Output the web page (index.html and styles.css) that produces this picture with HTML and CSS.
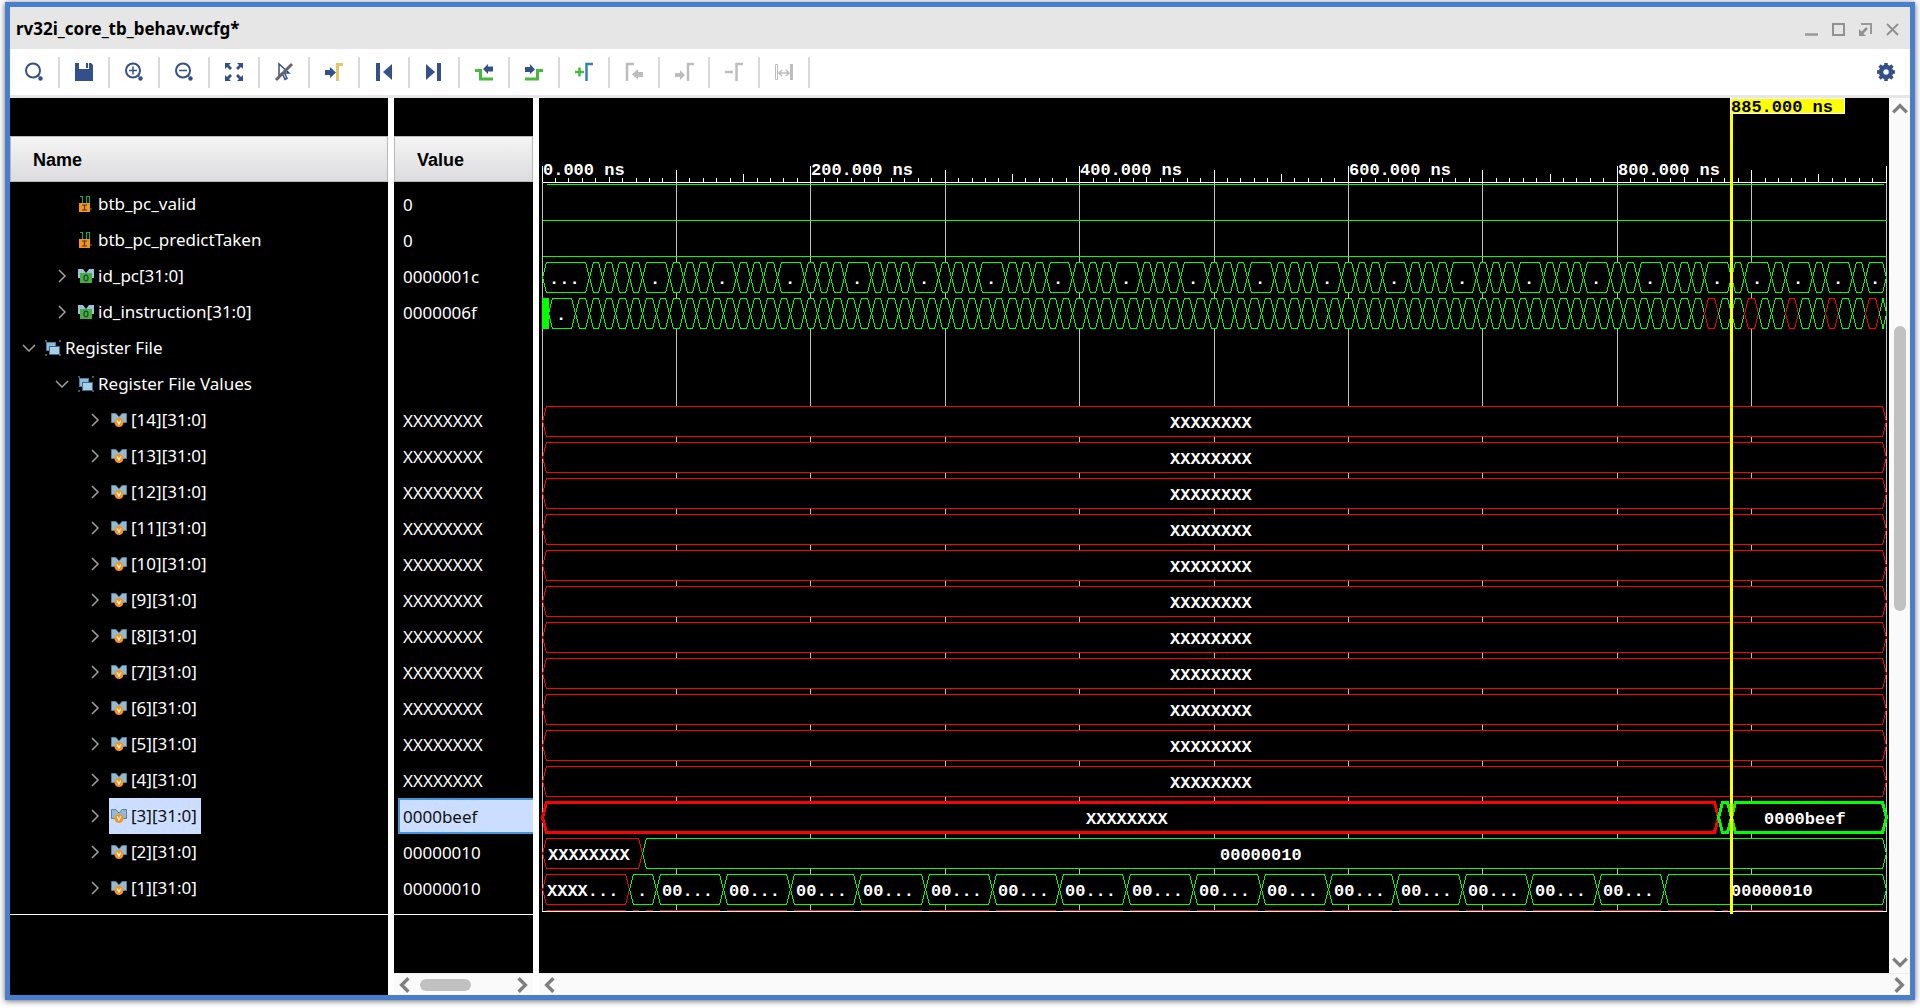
FILE: index.html
```html
<!DOCTYPE html>
<html lang="en">
<head>
<meta charset="utf-8">
<title>rv32i_core_tb_behav.wcfg*</title>
<link rel="stylesheet" href="styles.css">
</head>
<body>
<svg class="sprite" aria-hidden="true">
  <symbol id="chev-right" viewBox="0 0 16 16"><path d="M5 2l6 6-6 6" fill="none" stroke="#a0a0a0" stroke-width="1.5"/></symbol>
  <symbol id="chev-down" viewBox="0 0 16 16"><path d="M2 5l6 6 6-6" fill="none" stroke="#a0a0a0" stroke-width="1.5"/></symbol>
  <symbol id="sig" viewBox="0 0 16 16">
    <path d="M2 .5h2.500V7M8.500 7V.500h3V13H14" fill="none" stroke="#2ba04a" stroke-width="1.200"/>
    <rect x="1" y="7" width="11" height="9" fill="#f7931e"/>
    <path d="M4 9h5M4 14h5M6.500 9v5" stroke="#4a3a20" stroke-width="1.200"/>
  </symbol>
  <symbol id="bus" viewBox="0 0 16 16">
    <path d="M0 1h5l3 4 3-4h5v9H0z" fill="#9ac2d8"/>
    <rect x="2" y="5" width="12" height="10" fill="#45ad45"/>
    <ellipse cx="8" cy="10" rx="2" ry="2.800" fill="none" stroke="#2c4a2c" stroke-width="1.300"/>
  </symbol>
  <symbol id="var" viewBox="0 0 16 16">
    <path d="M.5 1.500h4.500L8 5l3-3.500h4.500v9h-15z" fill="#8fbbd3" stroke="#5f7f92" stroke-width="1"/>
    <circle cx="8" cy="10.500" r="4.500" fill="#f7931e"/>
    <path d="M6.200 8.500L8 12l1.800-3.500" fill="none" stroke="#fff" stroke-width="1.200"/>
  </symbol>
  <symbol id="grp" viewBox="0 0 16 16">
    <path d="M0 0h2v2H0zM14 0h2v2h-2zM0 14h2v2H0zM14 14h2v2h-2z" fill="#555"/>
    <rect x="1.500" y="2.500" width="9" height="8" fill="#8fbbd3" stroke="#4e7fa8"/>
    <rect x="4.500" y="6.500" width="10" height="8" fill="#a9cfe4" stroke="#3b6a96"/>
  </symbol>
</svg>

<main class="window">
  <header class="titlebar">
    <h1 class="title">rv32i_core_tb_behav.wcfg*</h1>
    <div class="controls">
      <button class="ctl" aria-label="Minimize"><svg viewBox="0 0 13 13"><path d="M0 11.500h13" stroke="#999" stroke-width="2.500"/></svg></button>
      <button class="ctl" aria-label="Maximize"><svg viewBox="0 0 13 13"><path d="M1 1h11v11H1z" fill="none" stroke="#919191" stroke-width="2"/></svg></button>
      <button class="ctl" aria-label="Float"><svg viewBox="0 0 13 13"><path d="M2 1h10v10" fill="none" stroke="#999" stroke-width="2"/><path d="M8 5L3 10" stroke="#919191" stroke-width="2.500"/><path d="M0 6v7h7z" fill="#919191"/></svg></button>
      <button class="ctl" aria-label="Close"><svg viewBox="0 0 13 13"><path d="M1 1l11 11M12 1L1 12" stroke="#919191" stroke-width="2"/></svg></button>
    </div>
  </header>

  <div class="toolbar" role="toolbar">
    <button class="tool" aria-label="Find"><svg viewBox="0 0 18 18" fill="none" stroke="#34508a"><circle cx="8" cy="7.500" r="7" stroke-width="2"/><path d="M13 12.500l1 1" stroke-width="2"/><circle cx="15.500" cy="15.500" r="2.200" fill="#34508a" stroke="none"/></svg></button>
    <button class="tool" aria-label="Save"><svg viewBox="0 0 18 18"><path d="M0 0h4v6h10V0h2l2 2v16H0z" fill="#34508a"/><path d="M11 0h2v5h-2z" fill="#34508a"/></svg></button>
    <button class="tool" aria-label="Zoom in"><svg viewBox="0 0 18 18" fill="none" stroke="#34508a"><circle cx="8" cy="7.500" r="7" stroke-width="2"/><path d="M4 7.500h8M8 3.500v8" stroke-width="1.500"/><path d="M13 12.500l1 1" stroke-width="2"/><circle cx="15.500" cy="15.500" r="2.200" fill="#34508a" stroke="none"/></svg></button>
    <button class="tool" aria-label="Zoom out"><svg viewBox="0 0 18 18" fill="none" stroke="#34508a"><circle cx="8" cy="7.500" r="7" stroke-width="2"/><path d="M4 7.500h8" stroke-width="1.500"/><path d="M13 12.500l1 1" stroke-width="2"/><circle cx="15.500" cy="15.500" r="2.200" fill="#34508a" stroke="none"/></svg></button>
    <button class="tool" aria-label="Zoom fit"><svg viewBox="0 0 18 18"><path d="M0 0h6L4 2l3 3-2 2-3-3-2 2zM18 0h-6l2 2-3 3 2 2 3-3 2 2zM0 18h6l-2-2 3-3-2-2-3 3-2-2zM18 18h-6l2-2-3-3 2-2 3 3 2-2z" fill="#34508a"/></svg></button>
    <button class="tool" aria-label="Toggle pointer"><svg viewBox="0 0 18 18" fill="none"><path d="M4 1v12l3-3 3 6.500 2-1-2.500-5.500H14z" stroke="#34508a" stroke-width="1.500"/><path d="M1 17L17 1" stroke="#666" stroke-width="3"/></svg></button>
    <button class="tool" aria-label="Go to cursor"><svg viewBox="0 0 18 18"><path d="M0 7h5V4l6 5.500L5 15v-3H0z" fill="#34508a"/><path d="M12.500 18V1.500H18" fill="none" stroke="#e0c864" stroke-width="3"/></svg></button>
    <button class="tool" aria-label="Go to time 0"><svg viewBox="0 0 18 18"><path d="M1 0h4v18H1zM17 1v16L8 9z" fill="#34508a"/></svg></button>
    <button class="tool" aria-label="Go to last time"><svg viewBox="0 0 18 18"><path d="M12 0h4v18h-4zM1 1v16l9-8z" fill="#34508a"/></svg></button>
    <button class="tool" aria-label="Previous transition"><svg viewBox="0 0 18 18"><path d="M0 7.500h5.500v8.500H18" fill="none" stroke="#46b93c" stroke-width="3"/><path d="M18 3.500h-5V1L8 6l5 5V8.500h5z" fill="#34508a"/></svg></button>
    <button class="tool" aria-label="Next transition"><svg viewBox="0 0 18 18"><path d="M0 16h12.500V7.500H18" fill="none" stroke="#46b93c" stroke-width="3"/><path d="M0 4h5V1l5 5.500L5 11V9H0z" fill="#34508a"/></svg></button>
    <button class="tool" aria-label="Add marker"><svg viewBox="0 0 18 18" fill="none"><path d="M0 9h9M4.500 4.500v9" stroke="#46b93c" stroke-width="2.500"/><path d="M11.500 18V1H18" stroke="#3580b5" stroke-width="2.500"/></svg></button>
    <button class="tool" aria-label="Previous marker" disabled><svg viewBox="0 0 18 18"><path d="M2 18V1h7" fill="none" stroke="#bdbdbd" stroke-width="2.500"/><path d="M18 9h-5V6l-6 5.500 6 5V14h5z" fill="#bdbdbd"/></svg></button>
    <button class="tool" aria-label="Next marker" disabled><svg viewBox="0 0 18 18"><path d="M0 10h5V7l5 5-5 5v-3H0z" fill="#bdbdbd"/><path d="M13 18V1h6" fill="none" stroke="#bdbdbd" stroke-width="2.500"/></svg></button>
    <button class="tool" aria-label="Remove marker" disabled><svg viewBox="0 0 18 18"><path d="M0 9h8M11.500 18V1H18" fill="none" stroke="#bdbdbd" stroke-width="2.500"/></svg></button>
    <button class="tool" aria-label="Swap cursors" disabled><svg viewBox="0 0 18 18"><path d="M.500 1.500h2v15h-2z" fill="none" stroke="#bdbdbd"/><path d="M15 1h3v16h-3z" fill="#bdbdbd"/><path d="M4 10h10M7 7l-3 3 3 3M11 7l3 3-3 3" fill="none" stroke="#bdbdbd" stroke-width="1.500"/></svg></button>
    <button class="tool settings" aria-label="Settings"><svg viewBox="0 0 18 18"><circle cx="9" cy="9" r="5" fill="none" stroke="#34508a" stroke-width="4.500"/><path d="M9 0v4M9 14v4M0 9h4M14 9h4M2.600 2.600l3 3M12.400 12.400l3 3M2.600 15.400l3-3M12.400 5.600l3-3" stroke="#34508a" stroke-width="3.600"/></svg></button>
  </div>

  <div class="panes">
    <section class="pane names">
      <h2 class="colhead">Name</h2>
      <ul class="rows">
        <li class="row l1"><span class="twist"></span><span class="label"><svg class="ico"><use href="#sig"/></svg>btb_pc_valid</span></li>
        <li class="row l1"><span class="twist"></span><span class="label"><svg class="ico"><use href="#sig"/></svg>btb_pc_predictTaken</span></li>
        <li class="row l1"><button class="twist" aria-label="Expand"><svg><use href="#chev-right"/></svg></button><span class="label"><svg class="ico"><use href="#bus"/></svg>id_pc[31:0]</span></li>
        <li class="row l1"><button class="twist" aria-label="Expand"><svg><use href="#chev-right"/></svg></button><span class="label"><svg class="ico"><use href="#bus"/></svg>id_instruction[31:0]</span></li>
        <li class="row l0"><button class="twist" aria-label="Collapse"><svg><use href="#chev-down"/></svg></button><span class="label"><svg class="ico"><use href="#grp"/></svg>Register File</span></li>
        <li class="row l1"><button class="twist" aria-label="Collapse"><svg><use href="#chev-down"/></svg></button><span class="label"><svg class="ico"><use href="#grp"/></svg>Register File Values</span></li>
        <li class="row l2"><button class="twist" aria-label="Expand"><svg><use href="#chev-right"/></svg></button><span class="label"><svg class="ico"><use href="#var"/></svg>[14][31:0]</span></li>
        <li class="row l2"><button class="twist" aria-label="Expand"><svg><use href="#chev-right"/></svg></button><span class="label"><svg class="ico"><use href="#var"/></svg>[13][31:0]</span></li>
        <li class="row l2"><button class="twist" aria-label="Expand"><svg><use href="#chev-right"/></svg></button><span class="label"><svg class="ico"><use href="#var"/></svg>[12][31:0]</span></li>
        <li class="row l2"><button class="twist" aria-label="Expand"><svg><use href="#chev-right"/></svg></button><span class="label"><svg class="ico"><use href="#var"/></svg>[11][31:0]</span></li>
        <li class="row l2"><button class="twist" aria-label="Expand"><svg><use href="#chev-right"/></svg></button><span class="label"><svg class="ico"><use href="#var"/></svg>[10][31:0]</span></li>
        <li class="row l2"><button class="twist" aria-label="Expand"><svg><use href="#chev-right"/></svg></button><span class="label"><svg class="ico"><use href="#var"/></svg>[9][31:0]</span></li>
        <li class="row l2"><button class="twist" aria-label="Expand"><svg><use href="#chev-right"/></svg></button><span class="label"><svg class="ico"><use href="#var"/></svg>[8][31:0]</span></li>
        <li class="row l2"><button class="twist" aria-label="Expand"><svg><use href="#chev-right"/></svg></button><span class="label"><svg class="ico"><use href="#var"/></svg>[7][31:0]</span></li>
        <li class="row l2"><button class="twist" aria-label="Expand"><svg><use href="#chev-right"/></svg></button><span class="label"><svg class="ico"><use href="#var"/></svg>[6][31:0]</span></li>
        <li class="row l2"><button class="twist" aria-label="Expand"><svg><use href="#chev-right"/></svg></button><span class="label"><svg class="ico"><use href="#var"/></svg>[5][31:0]</span></li>
        <li class="row l2"><button class="twist" aria-label="Expand"><svg><use href="#chev-right"/></svg></button><span class="label"><svg class="ico"><use href="#var"/></svg>[4][31:0]</span></li>
        <li class="row l2 selected"><button class="twist" aria-label="Expand"><svg><use href="#chev-right"/></svg></button><span class="label"><svg class="ico"><use href="#var"/></svg>[3][31:0]</span></li>
        <li class="row l2"><button class="twist" aria-label="Expand"><svg><use href="#chev-right"/></svg></button><span class="label"><svg class="ico"><use href="#var"/></svg>[2][31:0]</span></li>
        <li class="row l2"><button class="twist" aria-label="Expand"><svg><use href="#chev-right"/></svg></button><span class="label"><svg class="ico"><use href="#var"/></svg>[1][31:0]</span></li>
      </ul>
    </section>

    <section class="pane values">
      <h2 class="colhead">Value</h2>
      <ul class="rows">
        <li class="val">0</li>
        <li class="val">0</li>
        <li class="val">0000001c</li>
        <li class="val">0000006f</li>
        <li class="val"></li>
        <li class="val"></li>
        <li class="val">XXXXXXXX</li>
        <li class="val">XXXXXXXX</li>
        <li class="val">XXXXXXXX</li>
        <li class="val">XXXXXXXX</li>
        <li class="val">XXXXXXXX</li>
        <li class="val">XXXXXXXX</li>
        <li class="val">XXXXXXXX</li>
        <li class="val">XXXXXXXX</li>
        <li class="val">XXXXXXXX</li>
        <li class="val">XXXXXXXX</li>
        <li class="val">XXXXXXXX</li>
        <li class="val selected">0000beef</li>
        <li class="val">00000010</li>
        <li class="val">00000010</li>
      </ul>
      <div class="hscroll">
        <button class="arrow" aria-label="Scroll left"><svg viewBox="0 0 16 16"><path d="M11 2L5 8l6 6"/></svg></button>
        <div class="track"><div class="thumb"></div></div>
        <button class="arrow" aria-label="Scroll right"><svg viewBox="0 0 16 16"><path d="M5 2l6 6-6 6"/></svg></button>
      </div>
    </section>

    <section class="wavearea">
      <div class="waverow">
        <div class="wavepane"><svg id="wave" class="wave" role="img" aria-label="Waveforms"></svg></div>
        <div class="vscroll">
          <button class="arrow" aria-label="Scroll up"><svg viewBox="0 0 16 16"><path d="M2 11l6-6 6 6"/></svg></button>
          <div class="track"><div class="before"></div><div class="thumb"></div><div class="after"></div></div>
          <button class="arrow" aria-label="Scroll down"><svg viewBox="0 0 16 16"><path d="M2 5l6 6 6-6"/></svg></button>
        </div>
      </div>
      <div class="hscroll wide">
        <button class="arrow" aria-label="Scroll left"><svg viewBox="0 0 16 16"><path d="M11 2L5 8l6 6"/></svg></button>
        <div class="track"></div>
        <button class="arrow" aria-label="Scroll right"><svg viewBox="0 0 16 16"><path d="M5 2l6 6-6 6"/></svg></button>
      </div>
    </section>
  </div>
</main>
<script src="wave.js"></script>
</body>
</html>
```

FILE: styles.css
```css
* { box-sizing: border-box; }
body {
  margin: 0;
  padding: 2px 5px 8px;
  height: 100vh;
  background: #fff;
  color: #fff;
  font: 17px/24px "Noto Sans", "Open Sans", sans-serif;
}
h1, h2, ul { margin: 0; padding: 0; }
ul { list-style: none; }
button { margin: 0; padding: 0; border: 0; background: none; }
svg { display: block; }
.sprite { position: absolute; width: 0; height: 0; }

.window {
  display: flex;
  flex-direction: column;
  height: 100%;
  background: #fff;
  border: 5px solid #497dce;
  box-shadow: 0 1px 6px rgba(0, 0, 0, .6);
}
.titlebar {
  display: flex;
  align-items: center;
  justify-content: space-between;
  flex: none;
  height: 42px;
  padding: 2px 11px 0 6px;
  background: #e6e6e6;
}
.title { color: #000; font-size: 17px; line-height: 24px; font-weight: 700; }
.controls { display: flex; gap: 14px; }
.ctl, .ctl svg { width: 13px; height: 13px; }

.toolbar {
  display: flex;
  align-items: center;
  flex: none;
  height: 49px;
  border-bottom: 3px solid #e6e6e6;
}
.tool {
  display: flex;
  align-items: center;
  justify-content: center;
  width: 50px;
  height: 31px;
  border-right: 2px solid #d9d9d9;
}
.tool svg { width: 18px; height: 18px; overflow: visible; }
.settings { width: 48px; margin-left: auto; border: 0; }

.panes {
  display: grid;
  grid-template-columns: 378px 139px minmax(0, 1fr);
  gap: 6px;
  flex: 1;
  min-height: 0;
}
.pane { display: flex; flex-direction: column; padding-top: 38px; background: #000; }
.colhead {
  flex: none;
  height: 46px;
  padding: 0 22px;
  border: 1px solid #b8b8b8;
  background: linear-gradient(#f4f4f4, #dcdcde);
  color: #000;
  font: bold 18px/46px "Liberation Sans", Arial, sans-serif;
}
.rows { padding: 4px 0 8px; border-bottom: 1px solid #fff; }
.row { display: flex; align-items: center; gap: 6px; height: 36px; }
.l0 { padding-left: 11px; }
.l1 { padding-left: 44px; }
.l2 { padding-left: 77px; }
.twist, .twist svg, .ico { width: 16px; height: 16px; }
.label {
  display: flex;
  align-items: center;
  gap: 4px;
  height: 36px;
  padding: 0 4px 0 2px;
  line-height: 38px;
  white-space: nowrap;
}
.row.selected .label { background: #ccdeff; color: #111; }
.val { height: 36px; margin-left: 4px; padding-left: 5px; line-height: 38px; }
.val.selected {
  padding-left: 3px;
  border: 2px solid #4296d8;
  border-right: 0;
  background: #ccdeff;
  color: #111;
  line-height: 34px;
}

.arrow { width: 22px; height: 22px; display: flex; align-items: center; justify-content: center; }
.arrow svg { width: 18px; height: 18px; }
.arrow path { fill: none; stroke: #7f7f7f; stroke-width: 3; }
.hscroll {
  display: flex;
  align-items: center;
  flex: none;
  height: 22px;
  margin-top: auto;
  background: #fafafa;
  border-top: 1px solid #eee;
}
.track { flex: 1; }
.thumb { border-radius: 6px; background: #c1c1c1; }
.hscroll .thumb { width: 51px; height: 12px; margin-left: 4px; }

.wavearea { display: flex; flex-direction: column; min-width: 0; background: #000; }
.waverow { display: flex; flex: 1; min-height: 0; }
.wavepane { flex: 1; min-width: 0; overflow: hidden; }
.wave { width: 100%; height: 100%; }
.wave text { font: bold 17px "Liberation Mono", "Courier New", monospace; fill: #fff; white-space: pre; }
.wave .crisp { shape-rendering: crispEdges; }
.wave .flag { fill: #000; }
.vscroll {
  display: flex;
  flex-direction: column;
  align-items: center;
  width: 21px;
  background: #fafafa;
}
.vscroll .track { display: flex; flex-direction: column; }
.vscroll .thumb { width: 12px; height: 285px; }
.before { flex: 206; }
.after { flex: 341; }
```

FILE: wave.js
```js
const NS = 'http://www.w3.org/2000/svg';
const svg = document.getElementById('wave');
const GREEN = '#00ff00', RED = '#ff0000', GRID = '#c0c0c0';
const AXIS = 84, FIRST = 88, PITCH = 36, LEFT = 3, END = 1000;

function add(name, attrs, text) {
  const el = document.createElementNS(NS, name);
  for (const key in attrs) el.setAttribute(key, attrs[key]);
  if (name !== 'text') el.classList.add('crisp');
  if (text) el.textContent = text;
  svg.appendChild(el);
}

// Each cell is [start ns, end ns, label, colour].
function pcCells() {
  const edges = [0, 35, 45, 55, 65];
  for (let t = 75; t <= 775; t += 50) {
    edges.push(t, t + 20);
    if (t < 775) edges.push(t + 30, t + 40);
  }
  edges.push(805, 815, 835, 845, 855, 865, 885, 895, 915, 925, 945, 955, 975, 985, END);
  return edges.slice(1).map((e, i) => {
    const width = e - edges[i];
    return [edges[i], e, width > 30 ? '...' : width > 10 ? '.' : '', GREEN];
  });
}

function instructionCells() {
  const cells = [[5, 25, '.', GREEN]];
  const stalls = [865, 895, 925, 955, 985];
  for (let t = 25; t < END; t += 10) {
    cells.push([t, Math.min(t + 10, END), '', stalls.includes(t) ? RED : GREEN]);
  }
  return cells;
}

function reg1Cells() {
  const cells = [[0, 65, 'XXXX...', RED], [65, 85, '.', GREEN]];
  for (let t = 85; t < 835; t += 50) cells.push([t, t + 50, '00...', GREEN]);
  cells.push([835, END, '00000010', GREEN]);
  return cells;
}

function draw() {
  svg.replaceChildren();
  const scale = (svg.clientWidth - 6) / END;
  const x = t => LEFT + Math.floor(t * scale) + 0.5;
  const line = (x1, y1, x2, y2, stroke, width = 1) =>
    add('path', { d: `M${x1} ${y1}L${x2} ${y2}`, stroke, 'stroke-width': width });

  function bus(row, cells, width = 1) {
    const top = FIRST + row * PITCH + 4.5, mid = top + 15, bottom = top + 30;
    for (const [from, to, label, stroke] of cells) {
      const a = x(from), b = x(to), s = Math.min(4, (b - a) / 2);
      add('path', {
        d: `M${a} ${mid}L${a + s} ${top}H${b - s}L${b} ${mid}L${b - s} ${bottom}H${a + s}Z`,
        fill: '#000', stroke, 'stroke-width': width
      });
      if (label) add('text', { x: Math.round((a + b) / 2 - label.length * 5.5) - 1, y: top + 21.5 }, label);
    }
  }

  const base = FIRST + 20 * PITCH + 5.5;

  for (let t = 0; t <= END; t += 100) line(x(t), AXIS, x(t), base, GRID);
  for (let t = 0; t <= END; t += 10) {
    const height = t % 200 === 0 ? 18 : t % 100 === 0 ? 14 : t % 200 === 150 ? 10 : t % 200 === 50 ? 7 : 6;
    line(x(t), AXIS + 2 - height, x(t), AXIS, '#fff');
  }
  line(x(0), AXIS + 0.5, x(END), AXIS + 0.5, '#fff');
  for (let t = 0; t < END; t += 200) add('text', { x: x(t) + 0.5, y: AXIS - 7 }, t + '.000 ns');

  line(x(0) + 4, AXIS + 2.5, x(END) - 3, AXIS + 2.5, GREEN);
  line(x(0), FIRST + 34.5, x(END), FIRST + 34.5, GREEN);
  line(x(0), FIRST + PITCH + 34.5, x(END), FIRST + PITCH + 34.5, GREEN);

  bus(2, pcCells());
  bus(3, instructionCells());
  add('rect', { x: LEFT, y: FIRST + 3 * PITCH + 4, width: Math.round(5 * scale), height: 31, fill: GREEN });

  for (let row = 6; row <= 16; row++) bus(row, [[0, END, 'XXXXXXXX', RED]]);
  bus(18, [[0, 75, 'XXXXXXXX', RED], [75, END, '00000010', GREEN]]);
  bus(19, reg1Cells());
  bus(17, [[0, 875, 'XXXXXXXX', RED], [875, 885, '', GREEN], [885, END, '0000beef', GREEN]], 3);

  const edges = [0, 65, 75];
  for (let t = 85; t <= 835; t += 50) edges.push(t);
  edges.push(875, 885, END);
  for (let i = 1; i < edges.length; i++) {
    line(x(edges[i - 1]) + 3.5, base - 1, x(edges[i]) - 3.5, base - 1, RED);
  }
  line(x(0) - 0.5, base, x(END) + 0.5, base, '#fff');

  const cursor = x(885);
  line(cursor, 16, cursor, base + 2, '#ffff00', 3);
  add('rect', { x: cursor - 1, y: 0.5, width: 114, height: 15, fill: '#ffff00', stroke: '#fff' });
  add('text', { x: cursor - 0.5, y: 14, class: 'flag' }, '885.000 ns');
}

draw();
window.addEventListener('resize', draw);
```
